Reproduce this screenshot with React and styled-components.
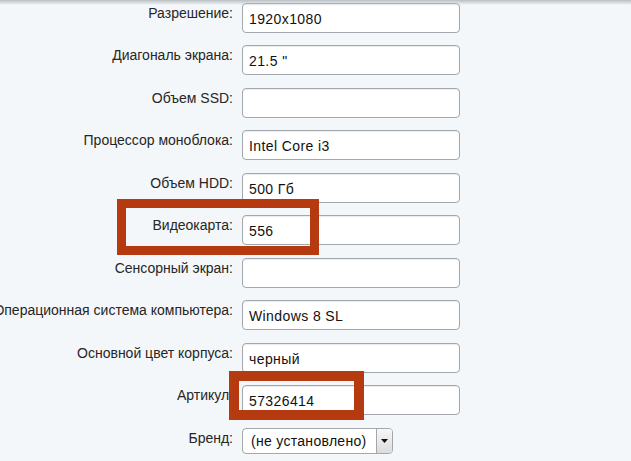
import React from 'react';
import styled, { createGlobalStyle } from 'styled-components';

const GlobalStyle = createGlobalStyle`
  html, body {
    margin: 0;
    padding: 0;
    background: #f4f7f9;
    overflow: hidden;
  }
`;

const Page = styled.div`
  position: relative;
  width: 631px;
  height: 461px;
  overflow: hidden;
  background: #f4f7f9;
  font-family: Arial, "Liberation Sans", sans-serif;
`;

const TopShade = styled.div`
  position: absolute;
  left: 0;
  right: 0;
  top: 0;
  height: 5px;
  background: linear-gradient(#b9bfc4, rgba(244, 247, 249, 0));
  z-index: 2;
`;

const Form = styled.div`
  display: grid;
  grid-template-columns: 233px 218px;
  column-gap: 9px;
  row-gap: 12.5px;
  padding-top: 2.5px;
`;

const Label = styled.div`
  display: flex;
  justify-content: flex-end;
  white-space: nowrap;
  font-size: 14px;
  line-height: 16px;
  padding-top: 2px;
  color: #262626;
`;

const Input = styled.div`
  box-sizing: border-box;
  height: 30px;
  background: #fff;
  border: 1px solid #a2a8ad;
  border-radius: 4px;
  box-shadow: inset 0 1px 1px rgba(0, 0, 0, 0.08);
  padding: 7px 0 0 6px;
  font-size: 14px;
  letter-spacing: 0.4px;
  line-height: 17px;
  color: #111;
  white-space: nowrap;
`;

const Select = styled.div`
  box-sizing: border-box;
  width: 151px;
  height: 26px;
  display: flex;
  background: #fff;
  border: 1px solid #a2a8ad;
  border-radius: 4px;
  overflow: hidden;
  font-size: 14px;
  letter-spacing: 0.3px;
  color: #111;
`;

const SelectValue = styled.div`
  flex: 1;
  padding: 4px 0 0 8px;
  line-height: 17px;
  white-space: nowrap;
`;

const SelectButton = styled.div`
  width: 15px;
  display: flex;
  align-items: center;
  justify-content: center;
  border-left: 1px solid #a2a8ad;
  background: linear-gradient(#f7f7f7, #dcdcdc);
`;

const Mark = styled.div`
  position: absolute;
  box-sizing: border-box;
  border: ${p => p.$w}px solid #b53a10;
  z-index: 3;
`;

const rows = [
  ['Разрешение:', '1920x1080'],
  ['Диагональ экрана:', '21.5 "'],
  ['Объем SSD:', ''],
  ['Процессор моноблока:', 'Intel Core i3'],
  ['Объем HDD:', '500 Гб'],
  ['Видеокарта:', '556'],
  ['Сенсорный экран:', ''],
  ['Операционная система компьютера:', 'Windows 8 SL'],
  ['Основной цвет корпуса:', 'черный'],
  ['Артикул:', '57326414'],
];

export default function App() {
  return (
    <Page>
      <GlobalStyle />
      <TopShade />
      <Form>
        {rows.map(([label, value]) => (
          <React.Fragment key={label}>
            <Label>{label}</Label>
            <Input>{value}</Input>
          </React.Fragment>
        ))}
        <Label>Бренд:</Label>
        <Select>
          <SelectValue>(не установлено)</SelectValue>
          <SelectButton>
            <svg width="7" height="4" viewBox="0 0 7 4">
              <path d="M0 0h7L3.5 4z" fill="#111" />
            </svg>
          </SelectButton>
        </Select>
      </Form>
      <Mark $w={9} style={{ left: 117, top: 199, width: 202, height: 56 }} />
      <Mark $w={10} style={{ left: 229, top: 371, width: 135, height: 49 }} />
    </Page>
  );
}
